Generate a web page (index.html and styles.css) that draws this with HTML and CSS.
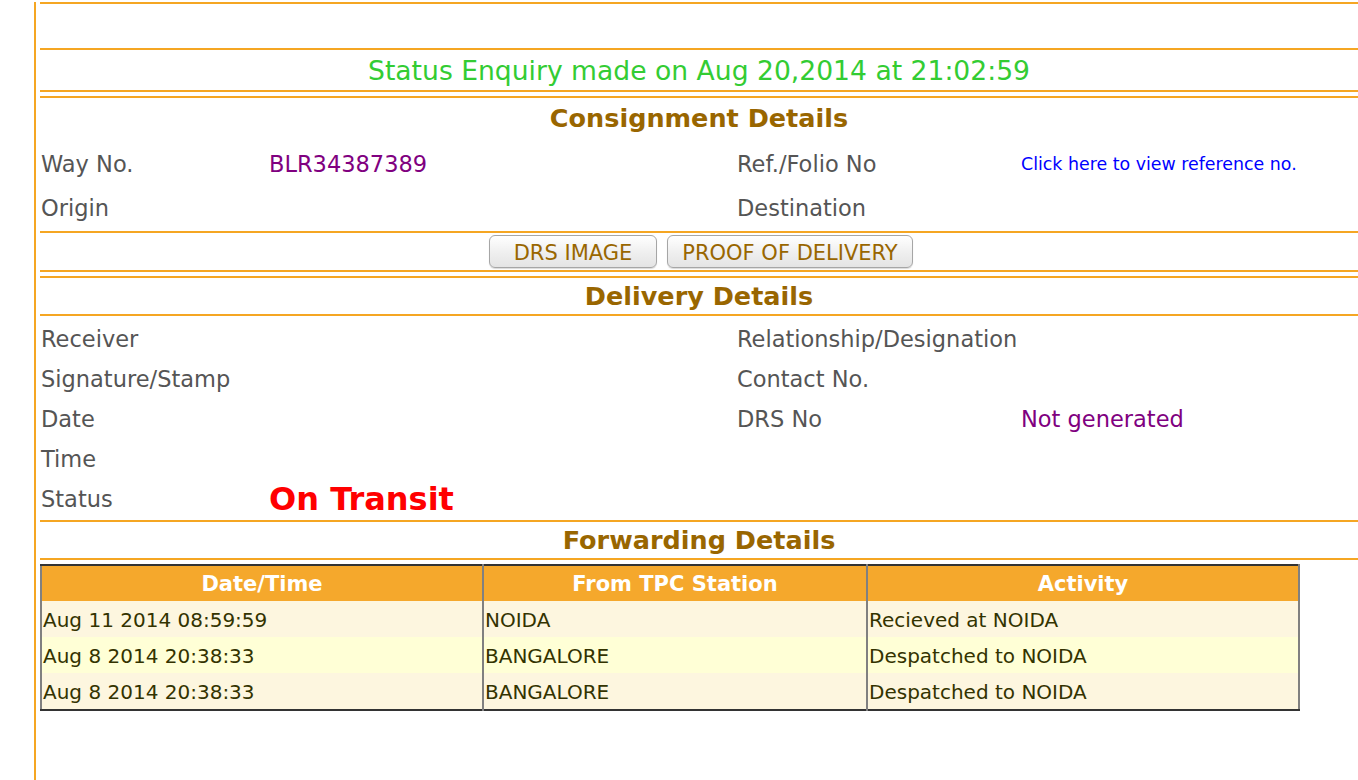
FILE: index.html
```html
<!DOCTYPE html>
<html>
<head>
<meta charset="utf-8">
<link rel="stylesheet" href="styles.css">
</head>
<body>
<div class="page">
  <div class="rule top-rule"></div>
  <div class="spacer"></div>
  <div class="rule"></div>
  <div class="enquiry">Status Enquiry made on Aug 20,2014 at 21:02:59</div>
  <div class="rule"></div>
  <div class="rule gap4"></div>
  <h2 class="section-title consign">Consignment Details</h2>
  <div class="info-grid consign-grid">
    <div class="label">Way No.</div>
    <div class="value">BLR34387389</div>
    <div class="label">Ref./Folio No</div>
    <div class="value"><a class="ref-link" href="#">Click here to view reference no.</a></div>
    <div class="label">Origin</div>
    <div class="value"></div>
    <div class="label">Destination</div>
    <div class="value"></div>
  </div>
  <div class="rule"></div>
  <div class="buttons">
    <button class="btn btn-drs">DRS IMAGE</button>
    <button class="btn btn-pod">PROOF OF DELIVERY</button>
  </div>
  <div class="rule"></div>
  <div class="rule gap4"></div>
  <h2 class="section-title delivery">Delivery Details</h2>
  <div class="rule"></div>
  <div class="info-grid delivery-grid">
    <div class="label">Receiver</div>
    <div class="value"></div>
    <div class="label">Relationship/Designation</div>
    <div class="value"></div>
    <div class="label">Signature/Stamp</div>
    <div class="value"></div>
    <div class="label">Contact No.</div>
    <div class="value"></div>
    <div class="label">Date</div>
    <div class="value"></div>
    <div class="label">DRS No</div>
    <div class="value">Not generated</div>
    <div class="label">Time</div>
    <div class="value"></div>
    <div class="label"></div>
    <div class="value"></div>
    <div class="label">Status</div>
    <div class="value status">On Transit</div>
    <div class="label"></div>
    <div class="value"></div>
  </div>
  <div class="rule"></div>
  <h2 class="section-title forwarding">Forwarding Details</h2>
  <div class="rule"></div>
  <table class="fwd">
    <thead>
      <tr><th class="c1">Date/Time</th><th class="c2">From TPC Station</th><th class="c3">Activity</th></tr>
    </thead>
    <tbody>
      <tr class="odd"><td>Aug 11 2014 08:59:59</td><td>NOIDA</td><td>Recieved at NOIDA</td></tr>
      <tr class="even"><td>Aug 8 2014 20:38:33</td><td>BANGALORE</td><td>Despatched to NOIDA</td></tr>
      <tr class="odd"><td>Aug 8 2014 20:38:33</td><td>BANGALORE</td><td>Despatched to NOIDA</td></tr>
    </tbody>
  </table>
</div>
</body>
</html>
```

FILE: styles.css
```css
html, body {
  margin: 0;
  padding: 0;
  background: #ffffff;
}
body {
  font-family: "DejaVu Sans", Verdana, sans-serif;
  color: #555555;
}
.page {
  margin-left: 34px;
  border-left: 2px solid #f5a623;
  padding-left: 4px;
  min-height: 780px;
  box-sizing: border-box;
}
.rule {
  height: 2px;
  background: #f5a623;
}
.top-rule {
  margin-top: 2px;
}
.gap4 {
  margin-top: 4px;
}
.spacer {
  height: 44px;
}
.enquiry {
  height: 40px;
  display: flex;
  align-items: center;
  justify-content: center;
  color: #33cc33;
  font-size: 26.6px;
}
.section-title {
  margin: 0;
  text-align: center;
  color: #996600;
  font-weight: bold;
  font-size: 25.5px;
  display: flex;
  align-items: center;
  justify-content: center;
}
.consign {
  height: 40px;
  padding-bottom: 4px;
}
.delivery {
  height: 36px;
}
.forwarding {
  height: 36px;
}
.info-grid {
  display: grid;
  grid-template-columns: 228px 468px 284px 1fr;
  font-size: 22.5px;
}
.info-grid > div {
  display: flex;
  align-items: center;
  padding-left: 1px;
}
.consign-grid {
  grid-auto-rows: 44px;
  padding-bottom: 1px;
}
.delivery-grid {
  grid-auto-rows: 40px;
  padding-top: 3px;
  padding-bottom: 1px;
}
.value {
  color: #800080;
}
.ref-link {
  color: #0000ff;
  text-decoration: none;
  font-size: 17.4px;
}
.status {
  color: #ff0000;
  font-weight: bold;
  font-size: 32px;
}
.buttons {
  height: 37px;
  display: flex;
  justify-content: center;
  align-items: center;
  gap: 10px;
  padding-left: 4px;
}
.btn {
  height: 33px;
  font-family: "DejaVu Sans", Verdana, sans-serif;
  font-size: 21px;
  color: #996600;
  background: linear-gradient(#ffffff, #f0f0f0 50%, #e4e4e4);
  border: 1px solid #a6a6a6;
  border-radius: 6px;
  padding: 3px 0 0 0;
  box-shadow: 0 1px 1px rgba(0,0,0,0.15);
}
.btn-drs {
  width: 168px;
}
.btn-pod {
  width: 246px;
}
.fwd {
  margin-top: 4px;
  width: 1260px;
  border-collapse: collapse;
  font-size: 20px;
  color: #333300;
  border-top: 2px solid #333333;
  border-bottom: 2px solid #333333;
  border-left: 2px solid #808080;
  border-right: 2px solid #808080;
}
.fwd th {
  background: #f5a82c;
  color: #ffffff;
  font-weight: bold;
  font-size: 21px;
  height: 34px;
  text-align: center;
  padding: 1px 0 0 0;
}
.fwd td {
  height: 34px;
  padding: 2px 0 0 1px;
  text-align: left;
}
.fwd th + th, .fwd td + td {
  border-left: 2px solid #808080;
}
.c1 { width: 440px; }
.c2 { width: 382px; }
.fwd tr.odd td {
  background: #fdf6df;
}
.fwd tr.even td {
  background: #ffffd6;
}
```
